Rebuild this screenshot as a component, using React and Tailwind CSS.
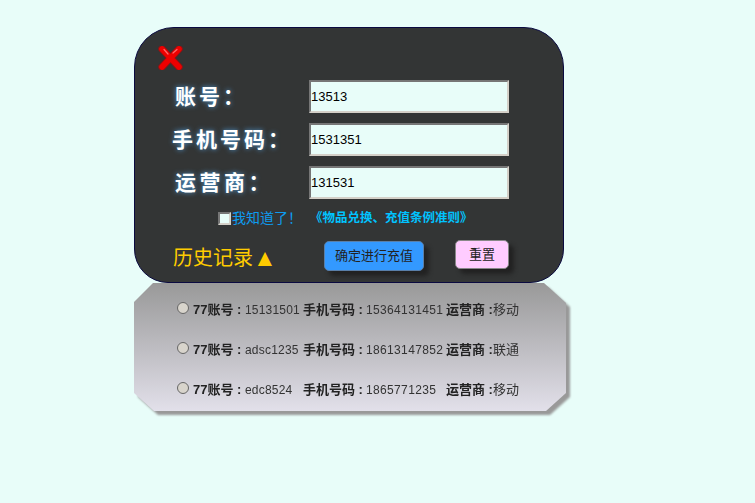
import React from "react";

const fields = [
  { label: "账号：", value: "13513", labelClass: "pl-[40px] tracking-[3px]" },
  { label: "手机号码：", value: "1531351", labelClass: "pl-[37px] tracking-[3px]" },
  { label: "运营商：", value: "131531", labelClass: "pl-[40px] tracking-[3.5px]" },
];

const history = [
  { account: "15131501", phone: "15364131451", carrier: "移动" },
  { account: "adsc1235", phone: "18613147852", carrier: "联通" },
  { account: "edc8524", phone: "1865771235", carrier: "移动" },
];

function CloseIcon() {
  return (
    <svg width="25" height="24" viewBox="0 0 25 24">
      <path d="M4 3 L21 21 M21 3 L4 21" stroke="#8a1414" strokeWidth="7.5" strokeLinecap="round" fill="none" />
      <path d="M4 3 L21 21 M21 3 L4 21" stroke="#ee0000" strokeWidth="5.5" strokeLinecap="round" fill="none" />
      <path d="M6 3.5 L10 8 M19 3.5 L15 7" stroke="#ff6a6a" strokeWidth="1.2" strokeLinecap="round" fill="none" />
    </svg>
  );
}

export default function App() {
  return (
    <div className="min-h-[503px] bg-[#e8fdf9] pt-[27px] pl-[134px] font-['Liberation_Sans','Noto_Sans_CJK_SC',sans-serif]">
      <div className="h-[256px] w-[430px] rounded-t-[40px] rounded-b-[34px] border border-[#0a0a40] bg-[#333535]">
        <div className="pt-[18px] pl-[23px]">
          <CloseIcon />
        </div>
        <div className="mt-[10px] flex flex-col gap-[10px]">
          {fields.map((field) => (
            <div key={field.label} className="flex items-center">
              <label
                className={`w-[174px] text-[21px] font-bold text-white [text-shadow:0_0_5px_#4f9bd8] ${field.labelClass}`}
              >
                {field.label}
              </label>
              <input
                readOnly
                value={field.value}
                className="h-[33px] w-[200px] border-2 border-t-[#767676] border-r-[#d4d0c8] border-b-[#d4d0c8] border-l-[#767676] bg-[#e8fdf9] text-[13px] text-black outline-none"
              />
            </div>
          ))}
        </div>
        <div className="mt-[9px] flex items-center pl-[83px] text-[14px]">
          <span className="h-[13px] w-[13px] border-2 border-t-[#767676] border-r-[#d4d0c8] border-b-[#d4d0c8] border-l-[#767676] bg-[#e8fdf9]" />
          <span className="ml-[1px] text-[#0e9cf0]">我知道了！</span>
          <span className="ml-[8px] text-[12.5px] font-bold text-[#00c3ff]">《物品兑换、充值条例准则》</span>
        </div>
        <div className="mt-[11px] flex items-start pl-[38px]">
          <span className="mt-[4px] flex h-[28px] w-[151px] items-center text-[20px] text-[#ffcc00]">
            历史记录<span className="text-[24px] leading-none">▲</span>
          </span>
          <button
            type="button"
            className="mt-[1px] h-[30px] w-[100px] rounded-[5px] border border-[#5a7fa8] bg-[#3399ff] text-[13px] text-[#222222] shadow-[5px_5px_4px_#222222]"
          >
            确定进行充值
          </button>
          <button
            type="button"
            className="ml-[31px] h-[29px] w-[54px] rounded-[5px] border border-[#888888] bg-[#ffccff] text-[13px] text-[#222222] shadow-[5px_5px_4px_#222222]"
          >
            重置
          </button>
        </div>
      </div>
      <div className="w-[438px] drop-shadow-[4px_4px_1px_#999999]">
        <div className="flex h-[128px] w-[432px] flex-col gap-[22px] bg-gradient-to-b from-[#999999] to-[#e2e0ea] pt-[18px] pl-[43px] text-[13px] text-[#333333] [clip-path:polygon(19px_0,410px_0,432px_20px,432px_110px,412px_128px,20px_128px,0_110px,0_19px)]">
          {history.map((item) => (
            <div key={item.account} className="flex h-[18px] items-center whitespace-nowrap">
              <input
                type="radio"
                readOnly
                className="mb-[4px] h-[12px] w-[12px] appearance-none rounded-full border border-[#666666] bg-[#d8d4cc]"
              />
              <b className="ml-[4px] w-[52px] text-[#222222]">77账号 :</b>
              <span className="w-[58px] text-[12px] tracking-[0.2px]">{item.account}</span>
              <b className="w-[63px] text-[#222222]">手机号码 :</b>
              <span className="w-[80px] text-[12px] tracking-[0.35px]">{item.phone}</span>
              <b className="w-[47px] text-[#222222]">运营商 :</b>
              <span>{item.carrier}</span>
            </div>
          ))}
        </div>
      </div>
    </div>
  );
}
